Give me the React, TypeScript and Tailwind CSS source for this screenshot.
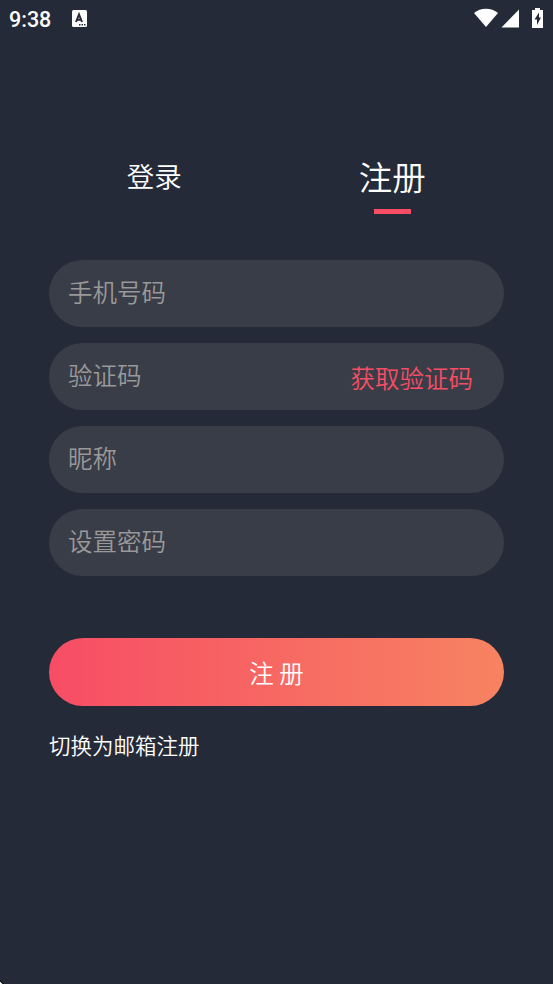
const fields = [
  { name: "phone", label: "手机号码" },
  { name: "code", label: "验证码", action: "获取验证码" },
  { name: "nickname", label: "昵称" },
  { name: "password", label: "设置密码" },
];

const StatusBar = () => {
  return (
    <div className="flex h-[38px] items-center justify-between pl-[9px] pr-[9px] text-white">
      <div className="flex items-center">
        <span className="w-[63px] pt-[2px] font-['Roboto',sans-serif] text-[21.5px] font-medium leading-none">
          9:38
        </span>
        <svg className="mb-[2px]" width="15" height="17" viewBox="0 0 15 17">
          <rect width="15" height="17" rx="1.5" fill="#fff" />
          <path d="M4 12 7 4.5 10 12M5 9.7h4" fill="none" stroke="#252a38" strokeWidth="2" />
          <path d="M7 14h1.5v1.5H7zM9.5 14H11v1.5H9.5zM12 14h1.5v1.5H12z" fill="#252a38" />
        </svg>
      </div>
      <svg className="mb-[2px]" width="70" height="20" viewBox="0 0 70 20" fill="#fff">
        <path d="M0 5C6.5-.7 17.5-.7 24 5L12 19z" />
        <path d="M45 1.5v18H27.5z" />
        <path d="M61 0h5v2h3v18H58V2h3z" />
        <path d="m65 4.5-4.5 7H63v5.5l4-7.5h-2z" fill="#252a38" />
      </svg>
    </div>
  );
};

export default function App() {
  return (
    <div className="flex h-[984px] w-[553px] flex-col bg-[#252a38] font-['Noto_Sans_CJK_SC',sans-serif] font-[350]">
      <StatusBar />
      <main className="px-[49px] pt-[115px]">
        <nav className="grid h-[61px] grid-cols-2">
          <div className="flex justify-center pr-[17px]">
            <button className="h-[44px] whitespace-nowrap text-[27.5px] leading-[44px] text-white">
              登录
            </button>
          </div>
          <div className="flex justify-center pl-[4px]">
            <button className="flex flex-col items-center whitespace-nowrap text-[33.5px] leading-[46px] text-white">
              注册
              <span className="mt-[10px] h-[5px] w-[37px] bg-[#f74d65]" />
            </button>
          </div>
        </nav>
        <form className="mt-[46px] flex flex-col gap-[15.6px]">
          {fields.map((field) => (
            <div
              key={field.name}
              className="flex h-[67.4px] items-center justify-between rounded-full bg-[#393d47] pl-[19px] pr-[31px] text-[24.5px] leading-none"
            >
              <span className="pb-[2px] text-[#999999]">{field.label}</span>
              {field.action && <span className="pt-[3px] text-[#f74d65]">{field.action}</span>}
            </div>
          ))}
          <button
            type="button"
            className="mt-[46px] h-[68px] rounded-full bg-linear-to-r/srgb from-[#f74d65] to-[#f78361] pt-[2px] text-[24.5px] text-white"
          >
            注 册
          </button>
        </form>
        <a className="mt-[22px] block text-[21.5px] leading-[34px] text-white">切换为邮箱注册</a>
      </main>
      {/* Rounded screen corner */}
      <svg className="mt-auto" width="4" height="4" viewBox="0 0 4 4">
        <path d="M0 0 4 4H0z" fill="#000" />
        <path d="M0 1.5 2.5 4H0z" fill="#fff" />
      </svg>
    </div>
  );
}
